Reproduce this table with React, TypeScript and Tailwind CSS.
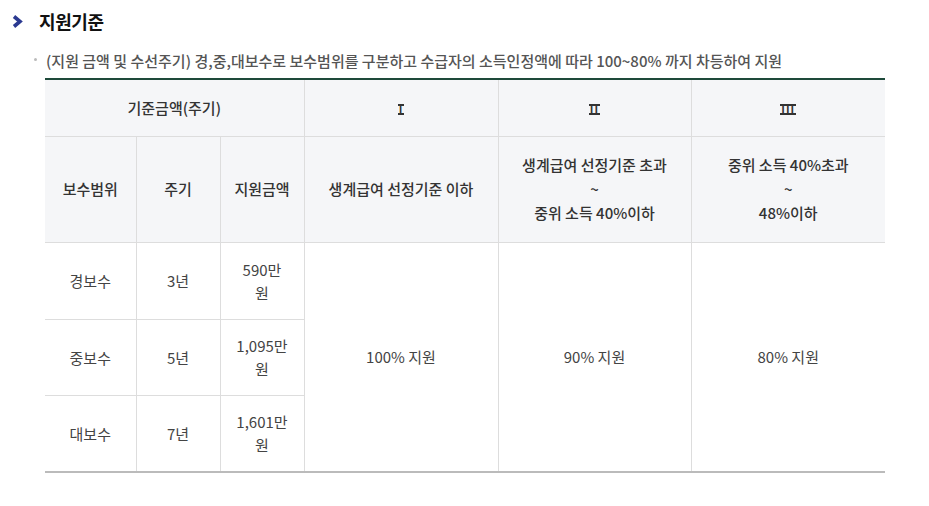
const font = { fontFamily: '"Noto Sans CJK KR", "Noto Sans", sans-serif' };

const th = "border border-[#dddddd] bg-[#f5f6f8] font-medium text-[#333333] text-[15px] leading-[24px]";
const td = "border border-[#dddddd] text-[#444444] text-[15px] leading-[23px]";
const numeral = "inline-flex items-center justify-center align-middle border-y-2 border-[#333333] px-[1px] h-[11px] text-[11px] leading-[7px] font-bold tracking-[1px]";

const rows = [
  { name: "경보수", cycle: "3년", amount: "590만" },
  { name: "중보수", cycle: "5년", amount: "1,095만" },
  { name: "대보수", cycle: "7년", amount: "1,601만" },
];

export default function App() {
  return (
    <div className="w-[929px] h-[506px] bg-white" style={font}>
      <div className="flex items-center gap-[16px] pl-[12px] pt-[9px] h-[33px]">
        <svg width="11" height="13" viewBox="0 0 11 13">
          <path d="M2 1.5 L8 6.5 L2 11.5" fill="none" stroke="#2b3a91" strokeWidth="3.6" strokeLinejoin="miter" />
        </svg>
        <h2 className="text-[18px] font-bold text-[#111111] tracking-[-0.4px]">지원기준</h2>
      </div>
      <div className="flex items-center pl-[34px] mt-[17px] h-[22px]">
        <span className="w-[3px] h-[3px] rounded-full bg-[#bbbbbb] mr-[9px] mb-[3px]" />
        <p className="text-[15px] text-[#555555] font-medium">
          (지원 금액 및 수선주기) 경,중,대보수로 보수범위를 구분하고 수급자의 소득인정액에 따라 100~80% 까지 차등하여 지원
        </p>
      </div>
      <div className="pl-[45px] mt-[6px]">
        <table className="w-[840px] border-collapse border-t-2 border-t-[#1e4a3a] border-b-2 border-b-[#bbbbbb] text-center table-fixed">
          <colgroup>
            <col className="w-[91px]" />
            <col className="w-[84px]" />
            <col className="w-[84px]" />
            <col className="w-[194px]" />
            <col className="w-[193px]" />
            <col className="w-[194px]" />
          </colgroup>
          <thead>
            <tr className="h-[57px]">
              <th colSpan={3} className={`${th} border-l-0`}>기준금액(주기)</th>
              <th className={th}><span className={numeral}>I</span></th>
              <th className={th}><span className={numeral}>II</span></th>
              <th className={`${th} border-r-0`}><span className={numeral}>III</span></th>
            </tr>
            <tr className="h-[106px]">
              <th className={`${th} border-l-0`}>보수범위</th>
              <th className={th}>주기</th>
              <th className={th}>지원금액</th>
              <th className={th}>생계급여 선정기준 이하</th>
              <th className={th}>
                생계급여 선정기준 초과
                <br />~<br />
                중위 소득 40%이하
              </th>
              <th className={`${th} border-r-0`}>
                중위 소득 40%초과
                <br />~<br />
                48%이하
              </th>
            </tr>
          </thead>
          <tbody>
            {rows.map((r, i) => (
              <tr key={r.name} className={i === 1 ? "h-[76px]" : "h-[77px]"}>
                <td className={`${td} border-l-0`}>{r.name}</td>
                <td className={td}>{r.cycle}</td>
                <td className={td}>
                  {r.amount}
                  <br />원
                </td>
                {i === 0 && (
                  <>
                    <td rowSpan={3} className={td}>100% 지원</td>
                    <td rowSpan={3} className={td}>90% 지원</td>
                    <td rowSpan={3} className={`${td} border-r-0`}>80% 지원</td>
                  </>
                )}
              </tr>
            ))}
          </tbody>
        </table>
      </div>
    </div>
  );
}
